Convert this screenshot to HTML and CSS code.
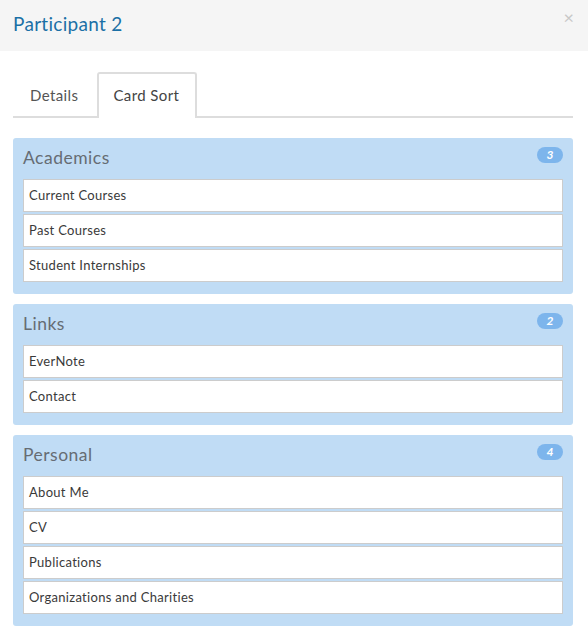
FILE: index.html
```html
<!DOCTYPE html>
<html>
<head>
<meta charset="utf-8">
<link rel="stylesheet" href="styles.css">
</head>
<body>
<div class="modal">
  <div class="modal-header">
    <h2 class="title">Participant 2</h2>
    <span class="close">&times;</span>
  </div>
  <div class="modal-body">
    <ul class="tabs">
      <li class="tab">Details</li>
      <li class="tab active">Card Sort</li>
    </ul>
    <div class="groups">
      <div class="group">
        <div class="group-head"><span class="group-name">Academics</span><span class="badge">3</span></div>
        <div class="cards">
          <div class="card">Current Courses</div>
          <div class="card">Past Courses</div>
          <div class="card">Student Internships</div>
        </div>
      </div>
      <div class="group">
        <div class="group-head"><span class="group-name">Links</span><span class="badge">2</span></div>
        <div class="cards">
          <div class="card">EverNote</div>
          <div class="card">Contact</div>
        </div>
      </div>
      <div class="group">
        <div class="group-head"><span class="group-name">Personal</span><span class="badge">4</span></div>
        <div class="cards">
          <div class="card">About Me</div>
          <div class="card">CV</div>
          <div class="card">Publications</div>
          <div class="card">Organizations and Charities</div>
        </div>
      </div>
    </div>
  </div>
</div>
</body>
</html>
```

FILE: styles.css
```css
* { box-sizing: border-box; }
html, body { margin: 0; padding: 0; background: #fff; }
body { font-family: "Lato", "Open Sans", sans-serif; color: #333; }

.modal { width: 588px; }

.modal-header {
  background: #f5f5f5;
  height: 51px;
  display: flex;
  align-items: flex-start;
  justify-content: space-between;
  padding: 0 13px;
}
.title {
  margin: 0;
  padding-top: 12px;
  font-size: 19px;
  font-weight: 400;
  color: #1b70a6;
  line-height: 24px;
  letter-spacing: 0.3px;
}
.close {
  color: #c8c8c8;
  font-size: 18px;
  line-height: 18px;
  padding-top: 8px;
  margin-right: 1px;
}

.modal-body { padding: 21px 15px 0 13px; }

.tabs {
  list-style: none;
  margin: 0;
  padding: 0;
  display: flex;
  border-bottom: 2px solid #dddddd;
  height: 46px;
}
.tab {
  padding: 0 16px 0 15px;
  font-size: 15px;
  color: #555;
  line-height: 42px;
  letter-spacing: 0.4px;
  border: 2px solid transparent;
  border-bottom: 0;
  margin-bottom: -2px;
  height: 46px;
}
.tab.active {
  border-color: #dddddd;
  border-radius: 3px 3px 0 0;
  background: #fff;
  color: #444;
  width: 100px;
  padding: 0 14px;
  margin-left: 1px;
}

.groups {
  display: flex;
  flex-direction: column;
  gap: 10px;
  margin-top: 20px;
}
.group {
  background: #c0dcf5;
  border-radius: 3px;
  padding: 0 10px 12px 10px;
}
.group-head {
  height: 41px;
  display: flex;
  justify-content: space-between;
  align-items: flex-start;
}
.group-name {
  font-size: 17.5px;
  color: #666c73;
  line-height: 20px;
  padding-top: 10px;
  letter-spacing: 0.5px;
}
.badge {
  margin-top: 9px;
  width: 26px;
  height: 16px;
  border-radius: 8px;
  background: #7db5ec;
  color: #fff;
  font-size: 12px;
  font-weight: 700;
  font-style: italic;
  line-height: 16px;
  text-align: center;
}
.cards {
  display: flex;
  flex-direction: column;
  gap: 2px;
}
.card {
  background: #fff;
  border: 1px solid #cccccc;
  height: 33px;
  padding: 0 5px;
  font-size: 13px;
  line-height: 31px;
  color: #3a3a3a;
  letter-spacing: 0.3px;
}
```
